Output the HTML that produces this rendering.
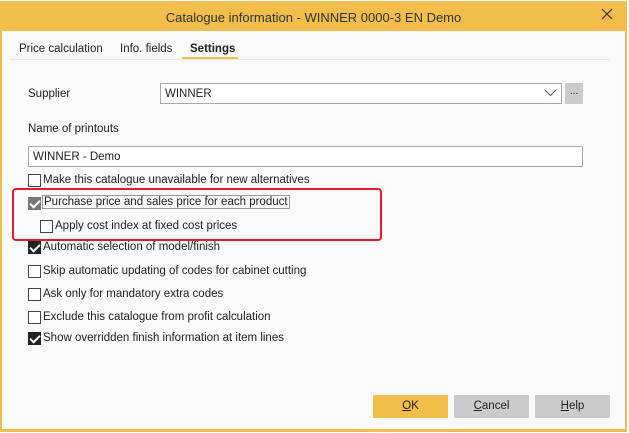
<!DOCTYPE html>
<html><head><style>
*{box-sizing:border-box;margin:0;padding:0}
body{width:629px;height:433px;background:#fff;font-family:"Liberation Sans",sans-serif;font-size:11.5px;color:#222;position:relative;overflow:hidden}
.win{position:absolute;left:0;top:1px;width:627px;height:431px;background:#f1bd4b;}
.inner{position:absolute;left:2px;top:31px;width:623px;height:398px;background:#f9f9f9}
.title{position:absolute;left:0;top:2px;width:627px;height:30px;text-align:center;line-height:31px;font-size:13px;color:#333}
.abs{position:absolute;white-space:nowrap}
.cb{position:absolute;width:13px;height:13px;border:1px solid #444;background:#fff}
.cb.on{background:#222;border-color:#222}
.cb.on::after{content:"";position:absolute;left:3px;top:0px;width:4px;height:8px;border:solid #fff;border-width:0 2px 2px 0;transform:rotate(45deg)}
.cb.gray{background:#777;border-color:#777}
.lbl{position:absolute;white-space:nowrap;font-size:11.5px}
.btn{position:absolute;top:395px;width:75px;height:23px;background:#cbcbcb;text-align:center;line-height:23px;font-size:11.5px}
</style></head><body>
<div class="win"></div>
<div class="title">Catalogue information - WINNER 0000-3 EN Demo</div>
<svg class="abs" style="left:601px;top:8px" width="12" height="12"><path d="M1 1L11 11M11 1L1 11" stroke="#333" stroke-width="1.2"/></svg>
<div class="inner"></div>
<div class="lbl" style="left:19px;top:43px">Price calculation</div>
<div class="lbl" style="left:120px;top:43px">Info. fields</div>
<div class="lbl" style="left:190px;top:43px;font-weight:bold">Settings</div>
<div class="abs" style="left:10px;top:59px;width:600px;height:1px;background:#e6e6e6"></div>
<div class="abs" style="left:182px;top:57px;width:56px;height:2px;background:#f1bd4b"></div>
<div class="lbl" style="left:28px;top:88px">Supplier</div>
<div class="abs" style="left:160px;top:83px;width:402px;height:21px;border:1px solid #aaa;background:#fff;padding:4px 4px;">WINNER</div>
<svg class="abs" style="left:544px;top:89px" width="13" height="8"><path d="M0.5 0.5L6.5 6.5L12.5 0.5" stroke="#555" fill="none"/></svg>
<div class="abs" style="left:565px;top:83px;width:18px;height:21px;background:#cbcbcb;text-align:center;line-height:18px;font-size:10px">...</div>
<div class="lbl" style="left:28px;top:123px">Name of printouts</div>
<div class="abs" style="left:28px;top:146px;width:555px;height:21px;border:1px solid #aaa;background:#fff;padding:4px 4px;">WINNER - Demo</div>

<div class="cb" style="left:28px;top:174px"></div><div class="lbl" style="left:43px;top:174px">Make this catalogue unavailable for new alternatives</div>
<div class="cb gray on" style="left:28px;top:197px"></div><div class="lbl" style="left:43px;top:196px;outline:1px solid #999;padding:0 1px">Purchase price and sales price for each product</div>
<div class="cb" style="left:40px;top:220px"></div><div class="lbl" style="left:55px;top:220px">Apply cost index at fixed cost prices</div>
<div class="cb on" style="left:28px;top:241px"></div><div class="lbl" style="left:43px;top:241px">Automatic selection of model/finish</div>
<div class="cb" style="left:28px;top:265px"></div><div class="lbl" style="left:43px;top:265px">Skip automatic updating of codes for cabinet cutting</div>
<div class="cb" style="left:28px;top:288px"></div><div class="lbl" style="left:43px;top:288px">Ask only for mandatory extra codes</div>
<div class="cb" style="left:28px;top:311px"></div><div class="lbl" style="left:43px;top:311px">Exclude this catalogue from profit calculation</div>
<div class="cb on" style="left:28px;top:332px"></div><div class="lbl" style="left:43px;top:332px">Show overridden finish information at item lines</div>
<div class="abs" style="left:12px;top:188px;width:370px;height:53px;border:2px solid #e8192c;border-radius:4px"></div>

<div class="btn" style="left:373px;background:#f1bd4b"><u>O</u>K</div>
<div class="btn" style="left:454px"><u>C</u>ancel</div>
<div class="btn" style="left:535px"><u>H</u>elp</div>
</body></html>
